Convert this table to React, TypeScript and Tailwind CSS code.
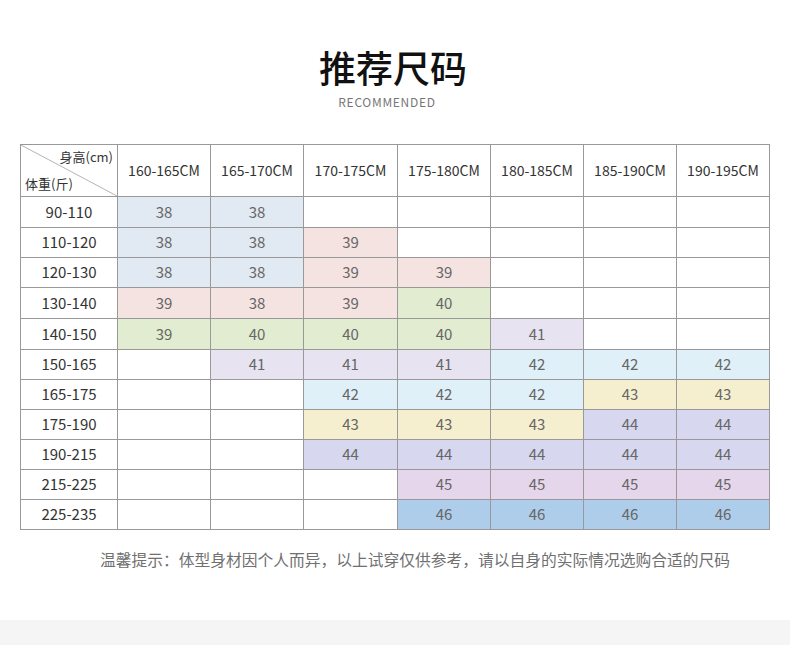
import React from "react";

type Cell = { v?: string; c?: string };

const BG = {
  bg: "bg-[#e1e9f2]",
  pk: "bg-[#f4e3e1]",
  gr: "bg-[#e2ecd0]",
  pu: "bg-[#e8e3f0]",
  lb: "bg-[#e0f0f8]",
  ye: "bg-[#f5efcf]",
  la: "bg-[#d7d8ef]",
  pp: "bg-[#e5d6eb]",
  bl: "bg-[#aecdea]",
};

const cols = ["160-165CM", "165-170CM", "170-175CM", "175-180CM", "180-185CM", "185-190CM", "190-195CM"];

const E: Cell = {};
const c = (v: string, k: keyof typeof BG): Cell => ({ v, c: BG[k] });

const rows: { label: string; cells: Cell[] }[] = [
  { label: "90-110", cells: [c("38", "bg"), c("38", "bg"), E, E, E, E, E] },
  { label: "110-120", cells: [c("38", "bg"), c("38", "bg"), c("39", "pk"), E, E, E, E] },
  { label: "120-130", cells: [c("38", "bg"), c("38", "bg"), c("39", "pk"), c("39", "pk"), E, E, E] },
  { label: "130-140", cells: [c("39", "pk"), c("38", "pk"), c("39", "pk"), c("40", "gr"), E, E, E] },
  { label: "140-150", cells: [c("39", "gr"), c("40", "gr"), c("40", "gr"), c("40", "gr"), c("41", "pu"), E, E] },
  { label: "150-165", cells: [E, c("41", "pu"), c("41", "pu"), c("41", "pu"), c("42", "lb"), c("42", "lb"), c("42", "lb")] },
  { label: "165-175", cells: [E, E, c("42", "lb"), c("42", "lb"), c("42", "lb"), c("43", "ye"), c("43", "ye")] },
  { label: "175-190", cells: [E, E, c("43", "ye"), c("43", "ye"), c("43", "ye"), c("44", "la"), c("44", "la")] },
  { label: "190-215", cells: [E, E, c("44", "la"), c("44", "la"), c("44", "la"), c("44", "la"), c("44", "la")] },
  { label: "215-225", cells: [E, E, E, c("45", "pp"), c("45", "pp"), c("45", "pp"), c("45", "pp")] },
  { label: "225-235", cells: [E, E, E, c("46", "bl"), c("46", "bl"), c("46", "bl"), c("46", "bl")] },
];

const font = { fontFamily: '"Noto Sans CJK SC", "Noto Sans", sans-serif' };

export default function App() {
  return (
    <div className="w-[790px] h-[645px] bg-white flex flex-col items-center overflow-hidden" style={font}>
      <div className="pt-[47px] mr-[4px] text-[37px] leading-[40px] font-medium text-[#111]">推荐尺码</div>
      <div className="mt-[8px] mr-[16px] text-[12px] leading-[14px] tracking-[0.7px] text-[#777]">RECOMMENDED</div>
      <div
        className="mt-[35px] w-[750px] grid gap-px p-px bg-[#999]"
        style={{
          gridTemplateColumns: "96px 92px 92px 93px 92px 92px 92px 92px",
          gridTemplateRows: "51px 30px 29px 29px 30px 30px 29px 29px 29px 29px 29px 29px",
        }}
      >
        <div className="relative bg-white">
          <svg className="absolute inset-0" width="96" height="51" viewBox="0 0 96 51">
            <line x1="0" y1="0" x2="96" y2="51" stroke="#b5b5b5" strokeWidth="1" />
          </svg>
          <div className="absolute right-[4px] top-[3px] text-[13px] leading-[18px] text-[#333]">身高(cm)</div>
          <div className="absolute left-[4px] bottom-[3px] text-[13px] leading-[18px] text-[#333]">体重(斤)</div>
        </div>
        {cols.map((h) => (
          <div key={h} className="bg-white flex items-center justify-center text-[14px] text-[#333]">
            {h}
          </div>
        ))}
        {rows.map((r) => (
          <React.Fragment key={r.label}>
            <div className="bg-white flex items-center justify-center text-[15px] text-[#333]">{r.label}</div>
            {r.cells.map((cell, i) => (
              <div
                key={i}
                className={`${cell.c ?? "bg-white"} flex items-center justify-center text-[15px] text-[#666]`}
              >
                {cell.v ?? ""}
              </div>
            ))}
          </React.Fragment>
        ))}
      </div>
      <div className="mt-[20px] ml-[40px] text-[15.75px] leading-[20px] text-[#707070]">
        温馨提示：体型身材因个人而异，以上试穿仅供参考，请以自身的实际情况选购合适的尺码
      </div>
      <div className="mt-[50px] w-full h-[40px] bg-[#f5f5f5] shrink-0" />
    </div>
  );
}
